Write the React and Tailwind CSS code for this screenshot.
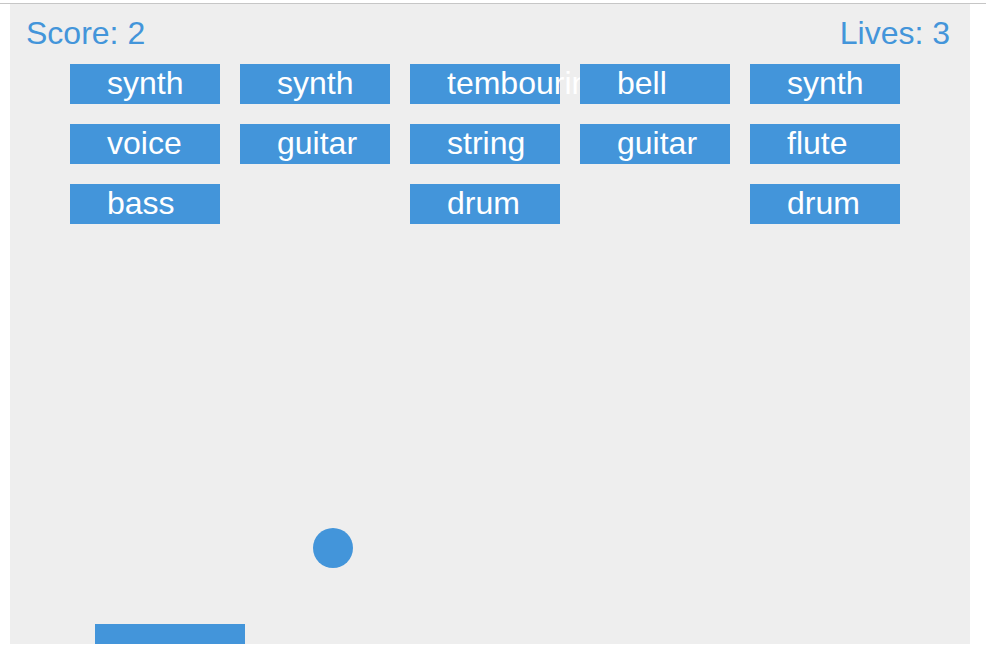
import React from 'react';

const BLUE = 'bg-[#4395da]';

const rows = [
  ['synth', 'synth', 'tembourine', 'bell', 'synth'],
  ['voice', 'guitar', 'string', 'guitar', 'flute'],
  ['bass', null, 'drum', null, 'drum'],
];

const Brick = ({ label }) => {
  if (!label) return <div className="w-[150px] h-[40px]" />;
  return (
    <div className={`${BLUE} w-[150px] h-[40px] pl-[37px] text-white text-[32px] leading-[38px] whitespace-nowrap`}>
      {label}
    </div>
  );
};

const App = () => {
  return (
    <div className="w-[986px] h-[652px] bg-white overflow-hidden" style={{ fontFamily: '"Liberation Sans", Arial, sans-serif' }}>
      <div className="mt-[3px] border-t border-[#c6c6c6]">
        <div className="relative ml-[10px] w-[960px] h-[640px] bg-[#eeeeee] overflow-hidden">
          <div className="h-[60px] flex justify-between pt-[13px] pl-[16px] pr-[20px] text-[32px] leading-[32px] text-[#4395da]">
            <span>Score: 2</span>
            <span>Lives: 3</span>
          </div>

          <div className="ml-[60px] grid grid-cols-[repeat(5,150px)] gap-x-[20px] gap-y-[20px]">
            {rows.flat().map((label, i) => (
              <Brick key={i} label={label} />
            ))}
          </div>

          {/* ball */}
          <div className={`absolute left-[303px] top-[524px] w-[40px] h-[40px] rounded-full ${BLUE}`} />
          {/* paddle */}
          <div className={`absolute left-[85px] top-[620px] w-[150px] h-[20px] ${BLUE}`} />
        </div>
      </div>
    </div>
  );
};

export default App;
